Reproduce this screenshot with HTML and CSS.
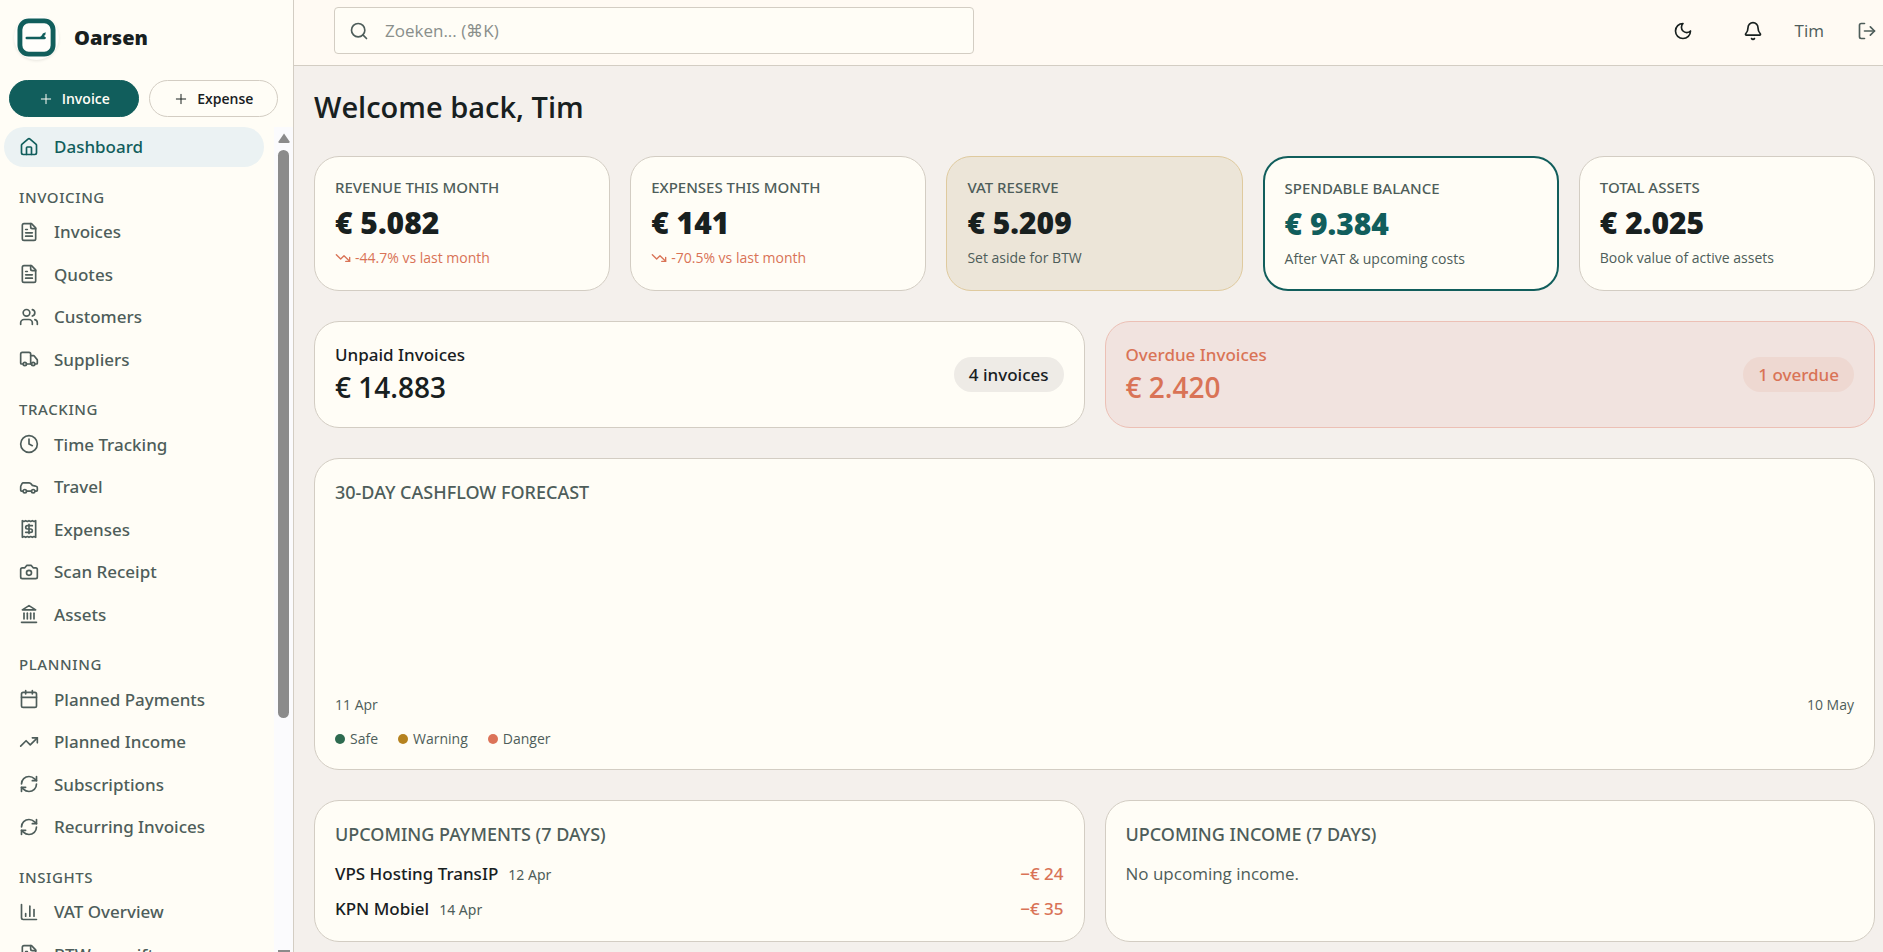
FILE: index.html
```html
<!DOCTYPE html>
<html lang="en">
<head>
<meta charset="utf-8">
<title>Oarsen – Dashboard</title>
<meta name="viewport" content="width=device-width, initial-scale=1">
<link rel="stylesheet" href="styles.css">
</head>
<body>
<svg class="sprite" aria-hidden="true">
  <symbol id="home" viewBox="0 0 24 24"><path d="M15 21v-8a1 1 0 0 0-1-1h-4a1 1 0 0 0-1 1v8"/><path d="M3 10a2 2 0 0 1 .709-1.528l7-5.999a2 2 0 0 1 2.582 0l7 5.999A2 2 0 0 1 21 10v9a2 2 0 0 1-2 2H5a2 2 0 0 1-2-2z"/></symbol>
  <symbol id="file" viewBox="0 0 24 24"><path d="M15 2H6a2 2 0 0 0-2 2v16a2 2 0 0 0 2 2h12a2 2 0 0 0 2-2V7Z"/><path d="M14 2v4a2 2 0 0 0 2 2h4"/><path d="M10 9H8"/><path d="M16 13H8"/><path d="M16 17H8"/></symbol>
  <symbol id="users" viewBox="0 0 24 24"><path d="M16 21v-2a4 4 0 0 0-4-4H6a4 4 0 0 0-4 4v2"/><circle cx="9" cy="7" r="4"/><path d="M22 21v-2a4 4 0 0 0-3-3.87"/><path d="M16 3.13a4 4 0 0 1 0 7.75"/></symbol>
  <symbol id="truck" viewBox="0 0 24 24"><path d="M14 18V6a2 2 0 0 0-2-2H4a2 2 0 0 0-2 2v11a1 1 0 0 0 1 1h2"/><path d="M15 18H9"/><path d="M19 18h2a1 1 0 0 0 1-1v-3.65a1 1 0 0 0-.22-.624l-3.48-4.35A1 1 0 0 0 17.52 8H14"/><circle cx="17" cy="18" r="2"/><circle cx="7" cy="18" r="2"/></symbol>
  <symbol id="clock" viewBox="0 0 24 24"><circle cx="12" cy="12" r="10"/><path d="M12 6v6l4 2"/></symbol>
  <symbol id="car" viewBox="0 0 24 24"><path d="M19 17h2c.6 0 1-.4 1-1v-3c0-.9-.7-1.700-1.500-1.900C18.700 10.600 16 10 16 10s-1.300-1.400-2.200-2.300c-.5-.4-1.100-.7-1.800-.7H5c-.6 0-1.100.4-1.400.9l-1.400 2.900A3.700 3.700 0 0 0 2 12v4c0 .6.4 1 1 1h2"/><circle cx="7" cy="17" r="2"/><path d="M9 17h6"/><circle cx="17" cy="17" r="2"/></symbol>
  <symbol id="receipt" viewBox="0 0 24 24"><path d="M4 2v20l2-1 2 1 2-1 2 1 2-1 2 1 2-1 2 1V2l-2 1-2-1-2 1-2-1-2 1-2-1-2 1Z"/><path d="M16 8h-6a2 2 0 1 0 0 4h4a2 2 0 1 1 0 4H8"/><path d="M12 17.500v-11"/></symbol>
  <symbol id="camera" viewBox="0 0 24 24"><path d="M14.500 4h-5L7 7H4a2 2 0 0 0-2 2v9a2 2 0 0 0 2 2h16a2 2 0 0 0 2-2V9a2 2 0 0 0-2-2h-3z"/><circle cx="12" cy="13" r="3"/></symbol>
  <symbol id="bank" viewBox="0 0 24 24"><path d="M3 22h18"/><path d="M6 18v-7"/><path d="M10 18v-7"/><path d="M14 18v-7"/><path d="M18 18v-7"/><path d="m12 2 8 5H4z"/></symbol>
  <symbol id="calendar" viewBox="0 0 24 24"><path d="M8 2v4"/><path d="M16 2v4"/><rect width="18" height="18" x="3" y="4" rx="2"/><path d="M3 10h18"/></symbol>
  <symbol id="up" viewBox="0 0 24 24"><path d="m22 7-8.500 8.500-5-5L2 17"/><path d="M16 7h6v6"/></symbol>
  <symbol id="down" viewBox="0 0 24 24"><path d="m22 17-8.500-8.500-5 5L2 7"/><path d="M16 17h6v-6"/></symbol>
  <symbol id="refresh" viewBox="0 0 24 24"><path d="M3 12a9 9 0 0 1 9-9 9.750 9.750 0 0 1 6.740 2.740L21 8"/><path d="M21 3v5h-5"/><path d="M21 12a9 9 0 0 1-9 9 9.750 9.750 0 0 1-6.740-2.740L3 16"/><path d="M8 16H3v5"/></symbol>
  <symbol id="chart" viewBox="0 0 24 24"><path d="M3 3v16a2 2 0 0 0 2 2h16"/><path d="M18 17V9"/><path d="M13 17V5"/><path d="M8 17v-3"/></symbol>
  <symbol id="plus" viewBox="0 0 24 24"><path d="M5 12h14"/><path d="M12 5v14"/></symbol>
  <symbol id="search" viewBox="0 0 24 24"><circle cx="11" cy="11" r="8"/><path d="m21 21-4.300-4.300"/></symbol>
  <symbol id="moon" viewBox="0 0 24 24"><path d="M12 3a6 6 0 0 0 9 9 9 9 0 1 1-9-9Z"/></symbol>
  <symbol id="bell" viewBox="0 0 24 24"><path d="M10.268 21a2 2 0 0 0 3.464 0"/><path d="M3.262 15.326A1 1 0 0 0 4 17h16a1 1 0 0 0 .74-1.673C19.410 13.956 18 12.499 18 8A6 6 0 0 0 6 8c0 4.499-1.411 5.956-2.738 7.326"/></symbol>
  <symbol id="logout" viewBox="0 0 24 24"><path d="M9 21H5a2 2 0 0 1-2-2V5a2 2 0 0 1 2-2h4"/><path d="m16 17 5-5-5-5"/><path d="M21 12H9"/></symbol>
</svg>
<div class="app">
  <aside class="sidebar">
    <div class="brand">
      <span class="brand-mark"><svg class="logo" viewBox="0 0 40 40" aria-hidden="true"><rect x="3" y="3" width="34" height="34" rx="9" fill="none" stroke="currentColor" stroke-width="5"/><path d="M10 20.500h18" fill="none" stroke="currentColor" stroke-width="2.500" stroke-linecap="round"/><path d="M22 20.500c2-.5 3.500-2.500 4.500-4.500l3-1.500-.5 3-1.500 1 2 1.500-.5 1.500z" fill="currentColor"/></svg></span>
      <span class="brand-name">Oarsen</span>
    </div>
    <div class="quick">
      <button type="button" class="pill pill-primary"><svg class="icon icon-s"><use href="#plus"/></svg>Invoice</button>
      <button type="button" class="pill"><svg class="icon icon-s"><use href="#plus"/></svg>Expense</button>
    </div>
    <div class="nav-wrap">
      <nav class="nav">
        <a class="item active" href="#"><svg class="icon"><use href="#home"/></svg>Dashboard</a>
        <h2 class="group">Invoicing</h2>
        <a class="item" href="#"><svg class="icon"><use href="#file"/></svg>Invoices</a>
        <a class="item" href="#"><svg class="icon"><use href="#file"/></svg>Quotes</a>
        <a class="item" href="#"><svg class="icon"><use href="#users"/></svg>Customers</a>
        <a class="item" href="#"><svg class="icon"><use href="#truck"/></svg>Suppliers</a>
        <h2 class="group">Tracking</h2>
        <a class="item" href="#"><svg class="icon"><use href="#clock"/></svg>Time Tracking</a>
        <a class="item" href="#"><svg class="icon"><use href="#car"/></svg>Travel</a>
        <a class="item" href="#"><svg class="icon"><use href="#receipt"/></svg>Expenses</a>
        <a class="item" href="#"><svg class="icon"><use href="#camera"/></svg>Scan Receipt</a>
        <a class="item" href="#"><svg class="icon"><use href="#bank"/></svg>Assets</a>
        <h2 class="group">Planning</h2>
        <a class="item" href="#"><svg class="icon"><use href="#calendar"/></svg>Planned Payments</a>
        <a class="item" href="#"><svg class="icon"><use href="#up"/></svg>Planned Income</a>
        <a class="item" href="#"><svg class="icon"><use href="#refresh"/></svg>Subscriptions</a>
        <a class="item" href="#"><svg class="icon"><use href="#refresh"/></svg>Recurring Invoices</a>
        <h2 class="group">Insights</h2>
        <a class="item" href="#"><svg class="icon"><use href="#chart"/></svg>VAT Overview</a>
        <a class="item" href="#"><svg class="icon"><use href="#file"/></svg>BTW-aangifte</a>
      </nav>
      <div class="scroll" aria-hidden="true">
        <svg class="arrow" viewBox="0 0 12 10"><path d="M6 0.500 11.500 8.500Q12 10 10.500 10h-9Q0 10 .5 8.500Z" fill="currentColor"/></svg>
        <div class="track"><div class="thumb"></div></div>
        <div class="arrow-end"></div>
      </div>
    </div>
  </aside>
  <div class="page">
    <header class="top">
      <label class="search"><svg class="icon"><use href="#search"/></svg><input type="search" placeholder="Zoeken... (⌘K)" aria-label="Zoeken"></label>
      <div class="tools">
        <button type="button" class="tool" aria-label="Dark mode"><svg class="icon"><use href="#moon"/></svg></button>
        <button type="button" class="tool" aria-label="Notifications"><svg class="icon"><use href="#bell"/></svg></button>
        <span class="user">Tim</span>
        <button type="button" class="tool tool-muted" aria-label="Log out"><svg class="icon"><use href="#logout"/></svg></button>
      </div>
    </header>
    <main class="main">
      <h1 class="title">Welcome back, Tim</h1>
      <section class="stats">
        <article class="card"><h3 class="label">Revenue this month</h3><p class="value">€ 5.082</p><p class="note down"><svg class="icon icon-s"><use href="#down"/></svg>-44.7% vs last month</p></article>
        <article class="card"><h3 class="label">Expenses this month</h3><p class="value">€ 141</p><p class="note down"><svg class="icon icon-s"><use href="#down"/></svg>-70.5% vs last month</p></article>
        <article class="card card-sand"><h3 class="label">VAT reserve</h3><p class="value">€ 5.209</p><p class="note">Set aside for BTW</p></article>
        <article class="card card-key"><h3 class="label">Spendable balance</h3><p class="value">€ 9.384</p><p class="note">After VAT &amp; upcoming costs</p></article>
        <article class="card"><h3 class="label">Total assets</h3><p class="value">€ 2.025</p><p class="note">Book value of active assets</p></article>
      </section>
      <section class="pair">
        <article class="card invoice"><div><h3 class="name">Unpaid Invoices</h3><p class="sum">€ 14.883</p></div><span class="badge">4 invoices</span></article>
        <article class="card invoice card-alert"><div><h3 class="name">Overdue Invoices</h3><p class="sum">€ 2.420</p></div><span class="badge">1 overdue</span></article>
      </section>
      <section class="card">
        <h3 class="heading">30-day cashflow forecast</h3>
        <div class="plot"></div>
        <div class="axis"><span>11 Apr</span><span>10 May</span></div>
        <ul class="legend"><li class="key safe">Safe</li><li class="key warning">Warning</li><li class="key danger">Danger</li></ul>
      </section>
      <section class="pair">
        <article class="card">
          <h3 class="heading">Upcoming payments (7 days)</h3>
          <ul class="rows">
            <li class="row"><span class="payee">VPS Hosting TransIP</span><span class="date">12 Apr</span><span class="amount">−€ 24</span></li>
            <li class="row"><span class="payee">KPN Mobiel</span><span class="date">14 Apr</span><span class="amount">−€ 35</span></li>
          </ul>
        </article>
        <article class="card">
          <h3 class="heading">Upcoming income (7 days)</h3>
          <p class="empty">No upcoming income.</p>
        </article>
      </section>
    </main>
  </div>
</div>
</body>
</html>
```
FILE: styles.css
```css
:root {
  --ink: #18201f;
  --muted: #4e5d5a;
  --teal: #115e5c;
  --coral: #d97356;
  --paper: #fffdf6;
  --line: #d3cdc3;
  --medium: "Noto Sans", "Open Sans", sans-serif;
}
* { box-sizing: border-box; }
body, h1, h2, h3, p, ul { margin: 0; padding: 0; }
ul { list-style: none; }
body {
  background: #f4f0ec;
  color: var(--ink);
  font-family: "Open Sans", "Noto Sans", sans-serif;
  font-size: 17px;
  line-height: 1.5;
}
button, input { font: inherit; color: inherit; }
button { cursor: pointer; }
.sprite { display: none; }
.icon {
  flex: none;
  width: 20px;
  height: 20px;
  fill: none;
  stroke: currentColor;
  stroke-width: 2;
  stroke-linecap: round;
  stroke-linejoin: round;
}
.icon-s { width: 16px; height: 16px; }

.app { display: flex; height: 100vh; overflow: hidden; }
.sidebar {
  flex: none;
  display: flex;
  flex-direction: column;
  width: 294px;
  background: var(--paper);
  border-right: 1px solid var(--line);
}
.brand { display: flex; align-items: center; gap: 15px; padding: 15px 14px 0; }
.brand-mark {
  display: flex;
  padding: 3px;
  border-radius: 50%;
  background: #fffefb;
  box-shadow: 0 1px 3px #00000018;
  color: var(--teal);
}
.logo { width: 39px; height: 39px; }
.brand-name { font-size: 20px; font-weight: 800; line-height: 30px; }
.quick { display: flex; gap: 10px; padding: 20px 15px 10px 9px; }
.pill {
  flex: 1;
  display: flex;
  align-items: center;
  justify-content: center;
  gap: 8px;
  height: 37px;
  padding: 0;
  border: 1px solid var(--line);
  border-radius: 20px;
  background: none;
  font-size: 14px;
  font-weight: 600;
}
.pill .icon { stroke-width: 1.5; }
.pill-primary { background: var(--teal); border-color: var(--teal); color: #fffdf6; }
.nav-wrap { flex: 1; display: flex; min-height: 0; }
.nav {
  flex: 1;
  display: flex;
  flex-direction: column;
  gap: 3px;
  padding: 0 10px 0 4px;
  overflow: hidden;
}
.item {
  flex: none;
  display: flex;
  align-items: center;
  gap: 15px;
  padding: 7px 15px;
  border-radius: 20px;
  color: var(--muted);
  font-family: var(--medium);
  font-weight: 500;
  text-decoration: none;
}
.active { background: #ebf2f3; color: var(--teal); }
.group {
  flex: none;
  padding: 16px 15px 1px;
  color: var(--muted);
  font-family: var(--medium);
  font-size: 15px;
  font-weight: 500;
  letter-spacing: 0.04em;
  text-transform: uppercase;
}
.scroll {
  display: flex;
  flex-direction: column;
  align-items: center;
  width: 19px;
  padding-top: 6px;
  background: #fbfbfd;
  color: #8b8b8b;
}
.arrow { width: 12px; height: 10px; }
.track { flex: 1; width: 11px; padding-top: 7px; }
.thumb { height: 71%; border-radius: 6px; background: #8b8b8b; }
.arrow-end { width: 12px; height: 2px; background: #8b8b8b; }

.page { flex: 1; min-width: 0; display: flex; flex-direction: column; }
.top {
  flex: none;
  display: flex;
  justify-content: space-between;
  padding: 7px 0 11px 40px;
  background: #fffaf3;
  border-bottom: 1px solid var(--line);
}
.search {
  display: flex;
  align-items: center;
  gap: 16px;
  width: 640px;
  height: 47px;
  padding: 0 14px;
  border: 1px solid var(--line);
  border-radius: 4px;
  background: var(--paper);
  color: var(--muted);
}
.search input { flex: 1; padding: 0; border: 0; outline: 0; background: none; }
.search input::placeholder { color: #8a8f8b; opacity: 1; }
.tools { display: flex; align-items: center; }
.tool { display: flex; padding: 10px; border: 0; background: none; }
.tool:first-child { margin-right: 30px; }
.tool-muted { margin-left: 23px; padding-right: 6px; color: var(--muted); }
.user { margin-left: 22px; color: var(--muted); }

.main {
  flex: 1;
  display: flex;
  flex-direction: column;
  gap: 30px;
  padding: 22px 8px 0 20px;
  overflow: hidden;
}
.title { font-size: 29px; font-weight: 600; line-height: 38px; }
.stats { display: grid; grid-template-columns: repeat(5, minmax(0, 1fr)); gap: 20px; }
.pair { display: grid; grid-template-columns: repeat(2, minmax(0, 1fr)); gap: 20px; }
.card {
  padding: 20px;
  border: 1px solid var(--line);
  border-radius: 25px;
  background: var(--paper);
}
.card-sand { background: #ece5d8; border-color: #dfca9e; }
.card-key { border: 2px solid var(--teal); }
.card-alert { background: #f1e3df; border-color: #ecc0b5; color: var(--coral); }
.label {
  color: var(--muted);
  font-family: var(--medium);
  font-size: 15px;
  font-weight: 500;
  line-height: 20px;
  text-transform: uppercase;
}
.value { padding: 6px 0 5px; font-size: 30px; font-weight: 800; line-height: 40px; }
.card-key .value { color: var(--teal); }
.note { display: flex; align-items: center; gap: 4px; color: var(--muted); font-size: 14px; line-height: 20px; }
.note.down { color: var(--coral); }
.invoice { display: flex; align-items: center; justify-content: space-between; }
.name { font-family: var(--medium); font-size: 17px; font-weight: 500; line-height: 26px; }
.sum { font-size: 28px; font-weight: 600; line-height: 39px; }
.badge {
  padding: 5px 15px;
  border-radius: 20px;
  background: #eeebe6;
  font-family: var(--medium);
  font-weight: 500;
  line-height: 25px;
}
.card-alert .badge { background: #eed8d1; }
.heading {
  color: var(--muted);
  font-family: var(--medium);
  font-size: 18px;
  font-weight: 500;
  line-height: 26px;
  text-transform: uppercase;
}
.plot { height: 190px; }
.axis, .legend { display: flex; color: var(--muted); font-size: 14px; line-height: 20px; }
.axis { justify-content: space-between; }
.legend { gap: 20px; padding-top: 14px; }
.key { display: flex; align-items: center; gap: 5px; }
.key::before { content: ""; width: 10px; height: 10px; border-radius: 50%; background: currentColor; }
.safe::before { background: #2d6a4f; }
.warning::before { background: #b5821f; }
.danger::before { background: #dc7358; }
.rows { display: grid; gap: 11px; padding-top: 15px; }
.row {
  display: flex;
  align-items: baseline;
  gap: 10px;
  font-family: var(--medium);
  font-weight: 500;
  line-height: 24px;
}
.date { color: var(--muted); font-size: 14px; font-weight: 400; line-height: 20px; }
.amount { margin-left: auto; color: var(--coral); }
.empty { padding-top: 15px; color: var(--muted); line-height: 24px; }
```
